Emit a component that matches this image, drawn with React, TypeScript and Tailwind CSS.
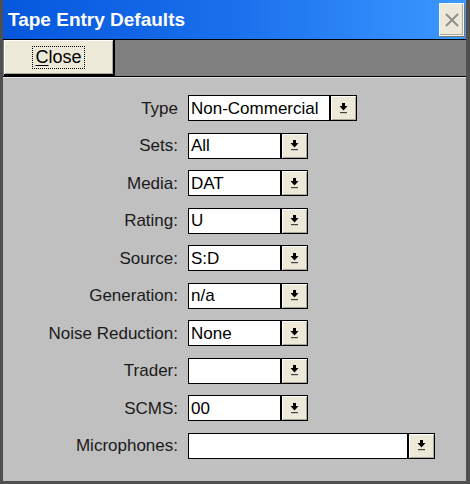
const fields = [
  { label: "Type", value: "Non-Commercial", width: 142 },
  { label: "Sets:", value: "All", width: 93 },
  { label: "Media:", value: "DAT", width: 93 },
  { label: "Rating:", value: "U", width: 93 },
  { label: "Source:", value: "S:D", width: 93 },
  { label: "Generation:", value: "n/a", width: 93 },
  { label: "Noise Reduction:", value: "None", width: 93 },
  { label: "Trader:", value: "", width: 93 },
  { label: "SCMS:", value: "00", width: 93 },
  { label: "Microphones:", value: "", width: 220 },
];

const DropArrow = () => (
  <svg width="9" height="11" viewBox="0 0 9 11">
    <rect x="3" y="0" width="3" height="3" fill="#000" />
    <polygon points="0.5,3 8.5,3 4.5,7.5" fill="#000" />
    <rect x="1" y="9" width="7" height="1.2" fill="#444" />
  </svg>
);

const ComboField = ({ value, width }: { value: string; width: number }) => (
  <div className="flex h-[26px]">
    <div
      className="flex items-center h-full bg-white border border-black pl-[2px] text-[17px] text-black leading-none"
      style={{ width }}
    >
      {value}
    </div>
    <div className="flex items-center justify-center w-[27px] h-full bg-[#ece9d8] border border-black shadow-[inset_1px_1px_0_#ffffff,inset_-1px_-1px_0_#aca899]">
      <DropArrow />
    </div>
  </div>
);

export default function App() {
  return (
    <div
      className="flex flex-col w-[470px] h-[484px] bg-[#c0c0c0] border-l-[3px] border-r-[4px] border-b-[3px] border-[#4f4f4f]"
      style={{ fontFamily: '"Liberation Sans", Arial, sans-serif' }}
    >
      <div className="flex items-center justify-between h-[39px] pl-[5px] pr-[2px] bg-gradient-to-r from-[#0657dd] via-[#1a70ec] to-[#3d98ff]">
        <span className="text-white font-bold text-[19px] leading-none">Tape Entry Defaults</span>
        <div className="flex items-center justify-center w-[25px] h-[33px] bg-[#ece9d8] border border-[#f8f8f4] shadow-[inset_-1px_-1px_0_#aca899,1px_1px_0_#7d7a6d]">
          <svg width="14" height="14" viewBox="0 0 14 14">
            <path d="M1 1 L13 13 M13 1 L1 13" stroke="#8e8e8e" strokeWidth="2" />
          </svg>
        </div>
      </div>

      <div className="flex h-[38px] bg-[#808080] border-y border-black">
        <button className="flex items-center justify-center ml-px w-[111px] h-full bg-[#ece9d8] border-r-2 border-b-2 border-black shadow-[inset_1px_1px_0_#ffffff,inset_-1px_-1px_0_#aca899]">
          <span className="px-[2px] py-[1px] border border-dotted border-black text-[18px] leading-[19px] text-black">
            <span className="underline underline-offset-2">C</span>lose
          </span>
        </button>
      </div>

      <div className="flex-1 border-t border-[#e4e4e4] pt-[17px]">
        <div className="grid grid-cols-[175px_auto] gap-x-[10px] gap-y-[11.56px] justify-start">
          {fields.map((f) => (
            <div key={f.label} className="contents">
              <div className="self-center text-right text-[17px] text-[#1a1a1a] leading-none">{f.label}</div>
              <ComboField value={f.value} width={f.width} />
            </div>
          ))}
        </div>
      </div>
    </div>
  );
}
